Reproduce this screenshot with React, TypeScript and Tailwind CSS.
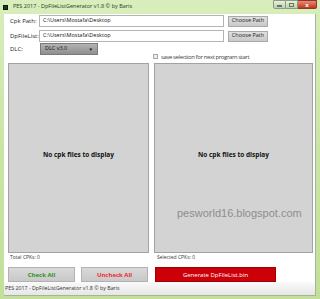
const ui = { fontFamily: '"Open Sans", "Noto Sans", sans-serif' };

function TitleBar() {
	return (
		<div className="h-[14px] flex items-center relative shrink-0">
			<div className="ml-[3px] w-[5px] h-[5px] bg-[#1d3b1d] border border-[#0c1a0c]"></div>
			<span className="ml-[5px] text-[5.5px] leading-none text-[#2b3a22]">PES 2017 - DpFileListGenerator v1.8 © by Baris</span>
			<div className="absolute right-[3px] top-0 flex">
				<div className="w-[13px] h-[9px] bg-gradient-to-b from-[#e6f2dc] to-[#bccfae] border border-[#8c9a80] rounded-bl-[2px] flex items-center justify-center">
					<div className="w-[5px] h-[2px] bg-[#6b7563] mt-[2px]"></div>
				</div>
				<div className="w-[12px] h-[9px] bg-gradient-to-b from-[#e6f2dc] to-[#bccfae] border-y border-r border-[#8c9a80] flex items-center justify-center">
					<div className="w-[5px] h-[4px] border border-[#6b7563]"></div>
				</div>
				<div className="w-[19px] h-[9px] bg-gradient-to-b from-[#e88a73] to-[#c2331c] border-y border-r border-[#8a3a2a] rounded-br-[2px] flex items-center justify-center text-white text-[6px] leading-none font-bold">x</div>
			</div>
		</div>
	)
}

function PathRow({ label, value }: { label: string, value: string }) {
	return (
		<div className="flex items-center h-[12px]">
			<span className="w-[35px] pl-[6px] whitespace-nowrap text-[6px] text-[#222] leading-none">{label}</span>
			<div className="w-[185px] h-[12px] border border-[#b4b4b4] bg-white flex items-center px-[3px] whitespace-nowrap text-[5.5px] leading-none text-[#111]">{value}</div>
			<button className="ml-[4px] w-[40px] h-[11px] border border-[#a9a9a9] bg-gradient-to-b from-[#e0e0e0] to-[#c9c9c9] whitespace-nowrap text-[5.5px] leading-none text-[#222]">Choose Path</button>
		</div>
	)
}

function Panel({ className, children }: { className: string, children?: any }) {
	return (
		<div className={"h-[190px] bg-[#d3d3d3] border border-[#a2a2a2] relative flex items-center justify-center " + className}>
			<span className="text-[6.5px] font-bold text-[#111] leading-none -mt-[6px]">No cpk files to display</span>
			{children}
		</div>
	)
}

export default function App() {
	return (
		<div className="w-[320px] h-[299px] bg-gradient-to-b from-[#d8eebc] via-[#c9e5a4] to-[#c2e09a] flex flex-col overflow-hidden" style={ui}>
			<TitleBar />
			<div className="ml-[4px] mr-[4px] h-[282px] bg-white border-r border-b border-[#a6b49a] flex flex-col">
				<div className="mt-[1px] flex flex-col gap-[3px]">
					<PathRow label="Cpk Path:" value="C:\Users\Mostafa\Desktop" />
					<PathRow label="DpFileList:" value="C:\Users\Mostafa\Desktop" />
				</div>
				<div className="flex h-[18px] mt-[1px]">
					<span className="w-[36px] pl-[6px] pt-[3px] text-[6px] text-[#222] leading-none">DLC:</span>
					<div className="w-[58px] h-[12px] border border-[#7a7a7a] bg-gradient-to-b from-[#b3b3b3] to-[#8f8f8f] flex items-center justify-between px-[4px] text-[5.5px] leading-none text-[#111]">
						<span>DLC v3.0</span>
						<span className="text-[4.5px]">▼</span>
					</div>
					<div className="ml-[55px] mt-[10px] flex items-center h-[7px]">
						<div className="w-[5px] h-[5px] border border-[#a8a8a8] bg-[#ececec]"></div>
						<span className="ml-[3px] whitespace-nowrap text-[6px] tracking-[-0.4px] leading-none text-[#444]">save selection for next program start</span>
					</div>
				</div>
				<div className="flex mt-[2px] pl-[4px]">
					<Panel className="w-[141px]" />
					<Panel className="w-[159px] ml-[5px]">
						<span className="absolute left-[22px] top-[144px] text-[11px] leading-none text-[#8e8e8e]" style={{ fontFamily: '"Liberation Sans", Arial, sans-serif' }}>pesworld16.blogspot.com</span>
					</Panel>
				</div>
				<div className="flex h-[9px] items-center text-[5px] leading-none text-[#333]">
					<span className="w-[149px] pl-[6px]">Total CPKs: 0</span>
					<span className="pl-[4px]">Selected CPKs: 0</span>
				</div>
				<div className="flex mt-[5px] pl-[4px] h-[15px]">
					<button className="w-[67px] h-[15px] border border-[#b2b2b2] bg-gradient-to-b from-[#d9d9d9] to-[#c8c8c8] text-[6px] font-bold leading-none text-[#2f8f22]">Check All</button>
					<button className="ml-[6px] w-[67px] h-[15px] border border-[#b2b2b2] bg-gradient-to-b from-[#d9d9d9] to-[#c8c8c8] text-[6px] font-bold leading-none text-[#ee2a2a]">Uncheck All</button>
					<button className="ml-[7px] w-[121px] h-[15px] border border-[#a00000] bg-[#cc0008] text-[6px] leading-none text-white">Generate DpFileList.bin</button>
				</div>
				<div className="mt-auto h-[13px] bg-gradient-to-b from-[#fafafa] to-[#e6e6e6] flex items-center pl-[1px] text-[5.3px] leading-none text-[#333]">
					PES 2017 - DpFileListGenerator v1.8 © by Baris
				</div>
			</div>
		</div>
	)
}
